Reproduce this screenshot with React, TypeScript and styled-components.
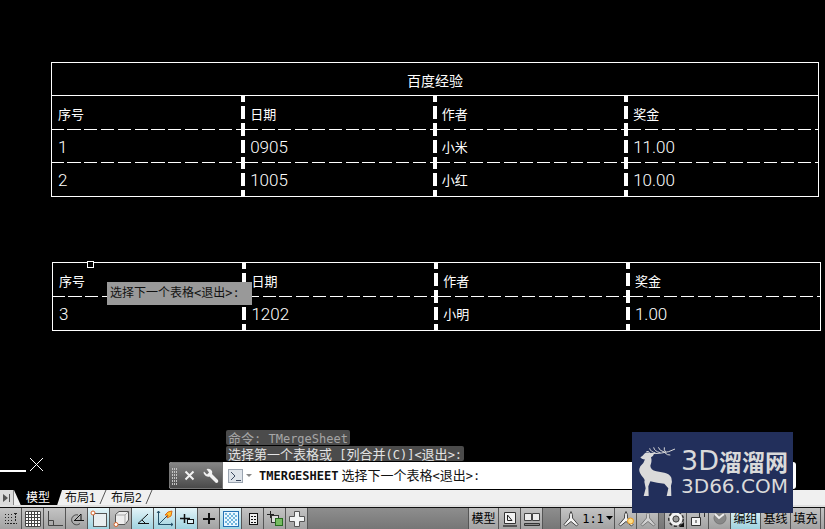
import React from "react";
import styled, { createGlobalStyle, css } from "styled-components";

const CJK = `"Noto Sans CJK SC", sans-serif`;

const GlobalStyle = createGlobalStyle`
  * { box-sizing: border-box; }
  body { margin: 0; background: #000; font-family: "Liberation Sans", ${CJK}; }
  button, input { font: inherit; color: inherit; margin: 0; padding: 0; border: 0; }
`;

const Window = styled.div`
  position: relative;
  min-height: 100vh;
  display: flex;
  flex-direction: column;
  overflow: hidden;
`;

const Canvas = styled.main`
  position: relative;
  flex: 1;
  display: flex;
  flex-direction: column;
  background: #000;
  color: #fff;
`;

/* ---------- drawing sheets ---------- */

const SheetFrame = styled.div<{ $second?: boolean }>`
  padding: ${(p) => (p.$second ? "65px 4px 0 52px" : "62px 6px 0 51px")};
`;

const SheetTable = styled.table`
  width: 100%;
  table-layout: fixed;
  border: 1px solid #fff;
  border-collapse: separate;
  border-spacing: 0;
`;

const Column = styled.col<{ $first?: boolean }>`
  width: ${(p) => (p.$first ? "24.7%" : "25%")};
`;

const SheetTitle = styled.th`
  height: 33px;
  padding: 1px 0 0;
  border-bottom: 1px solid #fff;
  font: 400 14px/20px ${CJK};
  text-align: center;
`;

const thick = `linear-gradient(to bottom, #fff 0 6px, transparent 6px 10px, #fff 10px 23px, transparent 23px 27px, #fff 27px) 0 0 / 4px 100% no-repeat`;
const dashFirst = `repeating-linear-gradient(to right, #fff 0 6.2%, transparent 6.2% 8.1%, #fff 8.1% 8.9%) 0 100% / 100% 1px no-repeat`;
const dashNext = `repeating-linear-gradient(to right, transparent 0 2%, #fff 2% 8.75%) 0 100% / 100% 1px no-repeat`;

const cell = css<{ $numeric?: boolean }>`
  height: 33px;
  padding: 1px 0 0 9px;
  text-align: left;
  white-space: nowrap;
  font: ${(p) => (p.$numeric ? "300 17px/20px Roboto" : `400 13px/20px "Noto Sans CJK SC"`)}, sans-serif;
  background: ${thick}, ${dashNext};
  &:first-child { padding-left: 6px; background: ${dashFirst}; }
  tr:last-child > & { background: ${thick}; }
  tr:last-child > &:first-child { background: none; }
`;
const HeadCell = styled.th`${cell} height: 34px;`;
const DataCell = styled.td`${cell}`;

const HEADERS = ["序号", "日期", "作者", "奖金"];

function Sheet({ title, rows, second }: { title?: string; rows: string[][]; second?: boolean }) {
  return (
    <SheetFrame $second={second}>
      <SheetTable>
        <colgroup>
          <Column $first />
          <Column />
          <Column />
          <col />
        </colgroup>
        {title && (
          <thead>
            <tr>
              <SheetTitle colSpan={4}>{title}</SheetTitle>
            </tr>
          </thead>
        )}
        <tbody>
          <tr>
            {HEADERS.map((h) => (
              <HeadCell key={h} scope="col">{h}</HeadCell>
            ))}
          </tr>
          {rows.map((r) => (
            <tr key={r[0]}>
              {r.map((c, i) => (
                <DataCell key={i} $numeric={/\d/.test(c)}>{c}</DataCell>
              ))}
            </tr>
          ))}
        </tbody>
      </SheetTable>
    </SheetFrame>
  );
}

const PickBox = styled.div`
  position: absolute;
  left: 87px;
  top: 261px;
  width: 7px;
  height: 7px;
  border: 1px solid #fff;
  background: #000;
`;

const Prompt = styled.div`
  position: absolute;
  left: 107px;
  top: 282px;
  width: 145px;
  height: 23px;
  padding-left: 3px;
  background: #999;
  color: #111;
  font: 12px/19px ${CJK};
  white-space: nowrap;
`;

const Axes = styled.svg`
  position: absolute;
  left: 0;
  bottom: 17px;
`;

/* ---------- command line ---------- */

const Mono = styled.span<{ $bold?: boolean }>`
  font-family: "DejaVu Sans Mono", monospace;
  font-size: 12px;
  font-weight: ${(p) => (p.$bold ? 700 : 400)};
`;

const Dock = styled.section`
  margin: auto 29px 1px 169px;
`;

const History = styled.div`
  display: flex;
  flex-direction: column;
  align-items: flex-start;
  gap: 1px;
  padding: 0 0 1px 57px;
`;

const HistoryLine = styled.div<{ $old?: boolean }>`
  height: 15px;
  padding: 0 2px;
  border-radius: 2px;
  background: #4b4b4b;
  color: ${(p) => (p.$old ? "#a6a6a6" : "#e4e4e4")};
  font: 13px/15px ${CJK};
  white-space: pre;
`;

const CommandBar = styled.div`
  display: flex;
  height: 27px;
  border-radius: 3px;
  overflow: hidden;
  background: #fff;
`;

const CommandTools = styled.div`
  display: flex;
  align-items: center;
  width: 54px;
  background: linear-gradient(to bottom, #858585, #4a4a4a);
  border: 1px solid #777;
`;

const ToolButton = styled.button<{ $w: number }>`
  width: ${(p) => p.$w}px;
  height: 25px;
  background: none;
  display: grid;
  place-items: center;
`;

const CommandLabel = styled.label`
  flex: 1;
  display: flex;
  align-items: center;
  gap: 3px;
  padding-left: 5px;
  color: #111;
  font: 13px/20px ${CJK};
  white-space: nowrap;
`;

const CommandInput = styled.input`
  flex: 1;
  min-width: 0;
  height: 20px;
  background: transparent;
  outline: none;
`;

/* ---------- layout tabs ---------- */

const TabBar = styled.nav`
  display: flex;
  height: 17px;
  background: #f0f0f0;
  border-bottom: 2px solid #e0e0e0;
  color: #111;
  font: 12px/16px "Liberation Sans", ${CJK};
`;

const NavEnd = styled.button`
  width: 14px;
  background: #dcdcdc;
  border-right: 1px solid #888;
  display: grid;
  place-items: center;
`;

const ActiveTab = styled.button`
  width: 48px;
  background: #000;
  color: #fff;
  clip-path: polygon(0 0, 100% 0, 90% 100%, 14% 100%);
`;

const Tab = styled.button`
  width: 46px;
  display: flex;
  justify-content: space-between;
  background: none;
  padding-left: 3px;
  white-space: nowrap;
`;

/* ---------- status bar ---------- */

const StatusBar = styled.footer`
  display: flex;
  height: 22px;
  border-top: 1px solid #111;
  background: linear-gradient(to bottom, #8e8e8e, #767676);
  color: #000;
  overflow: hidden;
`;

const StatusButton = styled.button<{ $on?: boolean; $w?: number }>`
  flex: none;
  width: ${(p) => p.$w ?? 22}px;
  height: 21px;
  display: flex;
  align-items: center;
  justify-content: center;
  gap: 1px;
  overflow: hidden;
  border-right: 1px solid #555;
  background: ${(p) =>
    p.$on ? "linear-gradient(to bottom, #e4f4f8, #9fd2df)" : "linear-gradient(to bottom, #c4c4c4, #a2a2a2)"};
  font: 12px/20px "Liberation Sans", ${CJK};
  white-space: nowrap;
`;

const Gap = styled.div<{ $w?: number }>`
  flex: ${(p) => (p.$w ? "none" : "1")};
  width: ${(p) => (p.$w ? p.$w + "px" : "auto")};
  border-right: 1px solid #555;
`;

function Icon({ children }: { children: React.ReactNode }) {
  return (
    <svg width="20" height="20" viewBox="0 0 20 20" fill="none" stroke="#222" aria-hidden="true">
      {children}
    </svg>
  );
}

const dots = [4, 7, 10].flatMap((x) => [5, 8, 11, 14].map((y) => [x, y]));
const checks = [0, 1, 2, 3, 4, 5].flatMap((r) =>
  [0, 1, 2, 3, 4, 5].filter((c) => (r + c) % 2 === 0).map((c) => [c, r])
);

const modes: { name: string; on?: boolean; icon: React.ReactNode }[] = [
  {
    name: "捕捉模式",
    icon: (
      <>
        {dots.map(([x, y]) => (
          <rect key={`${x}-${y}`} x={x} y={y} width="1" height="1" fill="#222" stroke="none" />
        ))}
        <path d="M14.500 4V12M6 14.500H16" strokeDasharray="2 1" />
        <path d="M13 4.500H16" />
      </>
    ),
  },
  {
    name: "栅格显示",
    icon: (
      <>
        <rect x="2" y="2" width="16" height="16" fill="#fff" stroke="none" />
        <path d="M2.500 2.500H17.500V17.500H2.500ZM5.500 2V18M8.500 2V18M11.500 2V18M14.500 2V18M2 5.500H18M2 8.500H18M2 11.500H18M2 14.500H18" stroke="#444" />
      </>
    ),
  },
  { name: "正交模式", icon: <path d="M3.500 2V16.500H18M3.500 11.500H8.500V16" stroke="#444" /> },
  {
    name: "极轴追踪",
    icon: (
      <>
        <path d="M11 6A5 5 0 1 0 13 14.500" stroke="#444" />
        <path d="M7 11.500H17M8 11L14 5V11" stroke="#111" />
      </>
    ),
  },
  {
    name: "对象捕捉",
    on: true,
    icon: (
      <>
        <rect x="4.500" y="4.500" width="13" height="13" fill="#e9eef0" stroke="#555" />
        <circle cx="4" cy="4" r="2" fill="#fff" stroke="#d8642a" />
      </>
    ),
  },
  {
    name: "三维对象捕捉",
    icon: (
      <>
        <path d="M4.500 5.500L8 2.500H17.500V11L14 15.500H4.500Z" fill="#eee" stroke="#555" />
        <path d="M14 15V6L17 3M14 6H5" stroke="#aaa" />
        <circle cx="5" cy="15.500" r="2" fill="#fff" stroke="#d8642a" />
      </>
    ),
  },
  { name: "对象捕捉追踪", on: true, icon: <path d="M15 5L5 14.500H16M9 11L12 14" stroke="#111" /> },
  {
    name: "动态UCS",
    on: true,
    icon: (
      <>
        <path d="M3.500 2V15.500H18M3.500 15.500L13 6M2 4L3.500 2L5 4M16 14L18 15.500L16 17" stroke="#234e66" />
        <path d="M13 3L17 2L16 7L12 9L13 6L10 6Z" fill="#ffc52e" stroke="#e06b12" />
      </>
    ),
  },
  {
    name: "动态输入",
    on: true,
    icon: (
      <>
        <path d="M3 9.500H13M7.500 5V14" stroke="#111" strokeWidth="1.500" />
        <rect x="10.500" y="10.500" width="6" height="4" fill="#dff2f8" stroke="#111" />
      </>
    ),
  },
  { name: "线宽", icon: <path d="M4 10H16M10 4V15" stroke="#111" strokeWidth="2" /> },
  {
    name: "透明度",
    on: true,
    icon: (
      <>
        <rect x="2.500" y="2.500" width="15" height="15" fill="#eaf7ff" stroke="#2672b5" />
        {checks.map(([c, r]) => (
          <rect key={`${c}-${r}`} x={4 + c * 2} y={4 + r * 2} width="2" height="2" fill="#74b7dd" stroke="none" />
        ))}
      </>
    ),
  },
  {
    name: "快捷特性",
    icon: (
      <>
        <rect x="6.500" y="4.500" width="8" height="11" fill="#eee" stroke="#111" />
        <path d="M8 7.500H10M11 7.500H13M8 10.500H10M11 10.500H13M8 13.500H10M11 13.500H13" stroke="#111" />
      </>
    ),
  },
  {
    name: "选择循环",
    icon: (
      <>
        <path d="M2 5.500H9M5.500 2V9" stroke="#222" />
        <rect x="6.500" y="6.500" width="7" height="7" fill="#ddd" stroke="#333" />
        <rect x="10.500" y="9.500" width="7" height="7" fill="#77bb62" stroke="#276d20" />
      </>
    ),
  },
  {
    name: "注释监视器",
    icon: <path d="M7.500 2.500H12.500V7.500H17.500V12.500H12.500V17.500H7.500V12.500H2.500V7.500H7.500Z" fill="#f2f4f4" stroke="#555" />,
  },
];

const scaleFigure = (
  <path d="M10 2.500Q12 5 11.500 9L17 15.500L15.500 17L10 12.500L4.500 17L3 15.500L8.500 9Q8 5 10 2.500Z" fill="#f4f4f4" stroke="#444" />
);

/* ---------- brand plate ---------- */

const Brand = styled.aside`
  position: absolute;
  right: 32px;
  bottom: 16px;
  width: 161px;
  height: 81px;
  padding: 13px 0 0 5px;
  display: flex;
  gap: 4px;
  background: #222f5b;
  color: #dadada;
`;

const BrandWords = styled.div`
  white-space: nowrap;
`;

const BrandName = styled.div`
  display: flex;
  align-items: center;
  height: 32px;
  font: 700 23px/32px ${CJK};
`;

const BrandLatin = styled.span`
  font: 400 27px/32px "DejaVu Sans", sans-serif;
`;

const BrandSite = styled.div`
  font: 400 20px/18px "DejaVu Sans", sans-serif;
`;

export default function App() {
  return (
    <Window>
      <GlobalStyle />
      <Canvas>
        <Sheet
          title="百度经验"
          rows={[
            ["1", "0905", "小米", "11.00"],
            ["2", "1005", "小红", "10.00"],
          ]}
        />
        <Sheet second rows={[["3", "1202", "小明", "1.00"]]} />
        <PickBox />
        <Prompt>选择下一个表格<Mono>&lt;</Mono>退出<Mono>&gt;:</Mono></Prompt>
        <Axes width="46" height="16" viewBox="0 0 46 16" stroke="#fff" aria-hidden="true">
          <path d="M0 14H26" strokeWidth="2" />
          <path d="M30 1L43 14M43 1L30 14" />
        </Axes>
        <Dock>
          <History>
            <HistoryLine $old>命令<Mono>: TMergeSheet</Mono></HistoryLine>
            <HistoryLine>
              选择第一个表格或<Mono> [</Mono>列合并<Mono>(C)]&lt;</Mono>退出<Mono>&gt;:</Mono>
            </HistoryLine>
          </History>
          <CommandBar>
            <CommandTools>
              <svg width="10" height="20" viewBox="0 0 10 20" aria-hidden="true">
                {[3, 5, 7].flatMap((x) =>
                  [2, 5, 8, 11, 14, 17].map((y) => (
                    <rect key={`${x}-${y}`} x={x - 1} y={y} width="1" height="2" fill="#c4c4c4" />
                  ))
                )}
              </svg>
              <ToolButton $w={19} aria-label="关闭">
                <svg width="11" height="11" viewBox="0 0 11 11" stroke="#f2f2f2" strokeWidth="2">
                  <path d="M1.500 1.500L9.500 9.500M9.500 1.500L1.500 9.500" />
                </svg>
              </ToolButton>
              <ToolButton $w={23} aria-label="自定义">
                <svg width="16" height="16" viewBox="0 0 16 16" fill="#f2f2f2">
                  <path d="M3.500 1Q7 0 9 3Q9.500 5 9 6L15 12Q16 15 13 15L6.500 8.500Q3 9.500 1 6Q0 4.500 1 3.500L4 6.500L6 4.500Z" />
                </svg>
              </ToolButton>
            </CommandTools>
            <CommandLabel>
              <svg width="28" height="17" viewBox="0 0 28 17" fill="none" aria-hidden="true">
                <rect x="0.500" y="2.500" width="14" height="13" fill="#dfe4ea" stroke="#9aa4b0" />
                <path d="M3 5L7 9L3 13M8 13.500H13" stroke="#3d4b60" />
                <path d="M18 7H24L21 10Z" fill="#888" />
              </svg>
              <Mono $bold>TMERGESHEET</Mono>
              <span>选择下一个表格<Mono>&lt;</Mono>退出<Mono>&gt;:</Mono></span>
              <CommandInput type="text" />
            </CommandLabel>
          </CommandBar>
        </Dock>
      </Canvas>

      <TabBar>
        <NavEnd aria-label="最后一个布局">
          <svg width="10" height="10" viewBox="0 0 10 10" fill="#555">
            <path d="M1 1L6 5L1 9ZM7 1H8V9H7Z" />
          </svg>
        </NavEnd>
        <ActiveTab>模型</ActiveTab>
        {["布局1", "布局2"].map((t) => (
          <Tab key={t}>
            {t}
            <svg width="9" height="15" viewBox="0 0 9 15" stroke="#555" aria-hidden="true">
              <path d="M7 0L1 14" />
            </svg>
          </Tab>
        ))}
      </TabBar>

      <StatusBar>
        {modes.map((m) => (
          <StatusButton key={m.name} $on={m.on} aria-label={m.name}>
            <Icon>{m.icon}</Icon>
          </StatusButton>
        ))}
        <Gap />
        <StatusButton $w={30}>模型</StatusButton>
        <StatusButton aria-label="快速查看布局">
          <Icon>
            <path d="M4.500 3.500H15.500V14.500H4.500Z" fill="#f2f2f2" stroke="#333" />
            <path d="M7.500 6V11.500H12Z" />
            <path d="M3 17H17" strokeWidth="2" stroke="#555" />
          </Icon>
        </StatusButton>
        <StatusButton aria-label="快速查看图形">
          <Icon>
            <path d="M2.500 4.500H9.500V11.500H2.500ZM10.500 4.500H17.500V11.500H10.500Z" fill="#eee" stroke="#444" />
            <path d="M2.500 14.500H17.500V16.500H2.500Z" fill="#888" stroke="#333" />
          </Icon>
        </StatusButton>
        <Gap $w={18} />
        <StatusButton $w={54}>
          <Icon>{scaleFigure}</Icon>
          <Mono>1:1</Mono>
          <svg width="9" height="8" viewBox="0 0 9 8" aria-hidden="true">
            <path d="M1 1H8L4.500 5Z" />
          </svg>
        </StatusButton>
        <StatusButton aria-label="注释可见性">
          <Icon>
            {scaleFigure}
            <circle cx="14.500" cy="12" r="3" fill="#ffdf87" stroke="#e99a24" />
          </Icon>
        </StatusButton>
        <StatusButton aria-label="自动添加比例">
          <Icon>
            <g opacity="0.5">{scaleFigure}</g>
          </Icon>
        </StatusButton>
        <Gap $w={6} />
        <StatusButton aria-label="切换工作空间">
          <Icon>
            <circle cx="10" cy="10" r="7" stroke="#333" strokeWidth="2" strokeDasharray="3 2" />
            <circle cx="10" cy="10" r="5" fill="#999" stroke="#f2f2f2" strokeWidth="3" />
            <circle cx="10" cy="10" r="3" stroke="#444" />
            <path d="M18 13V18H13Z" fill="#111" stroke="none" />
          </Icon>
        </StatusButton>
        <StatusButton aria-label="锁定">
          <Icon>
            <path d="M3.500 8.500H12.500V16.500H3.500Z" fill="#f4f4f4" stroke="#333" />
            <path d="M11.500 8V3.500H16.500V8M8 11V14" stroke="#333" />
          </Icon>
        </StatusButton>
        <StatusButton aria-label="硬件加速">
          <Icon>
            <circle cx="10" cy="9" r="6" fill="#888" stroke="#777" />
            <path d="M5 5L9 9L14 5" stroke="#eee" strokeWidth="2" />
          </Icon>
        </StatusButton>
        <StatusButton $w={30} $on>编组</StatusButton>
        <StatusButton $w={30}>基线</StatusButton>
        <StatusButton $w={30}>填充</StatusButton>
        <StatusButton $w={4} aria-label="更多" />
      </StatusBar>

      <Brand>
        <svg width="40" height="54" viewBox="48 60 120 162" fill="#dadada" aria-hidden="true">
          <path d="M58 97Q65 93 70 86Q76 80 86 84L100 85Q98 93 90 97Q94 108 88 122Q88 134 106 139L130 143Q146 146 151 158Q155 170 150 182L151 213H137L142 190L130 176Q108 174 88 169L82 184L83 213H68L74 190L70 170Q74 164 62 152Q50 138 58 124Q70 113 72 103Q62 104 58 97Z" />
          <path
            d="M86 85Q84 76 76 80M88 85Q100 87 122 84Q144 82 162 72M104 84Q88 80 86 70M118 83Q100 79 98 67M132 82Q114 77 112 67M134 81Q128 75 130 67M130 82Q140 92 148 90"
            fill="none"
            stroke="#dadada"
            strokeWidth="3"
          />
        </svg>
        <BrandWords>
          <BrandName><BrandLatin>3D</BrandLatin>溜溜网</BrandName>
          <BrandSite>3D66.COM</BrandSite>
        </BrandWords>
      </Brand>
    </Window>
  );
}
